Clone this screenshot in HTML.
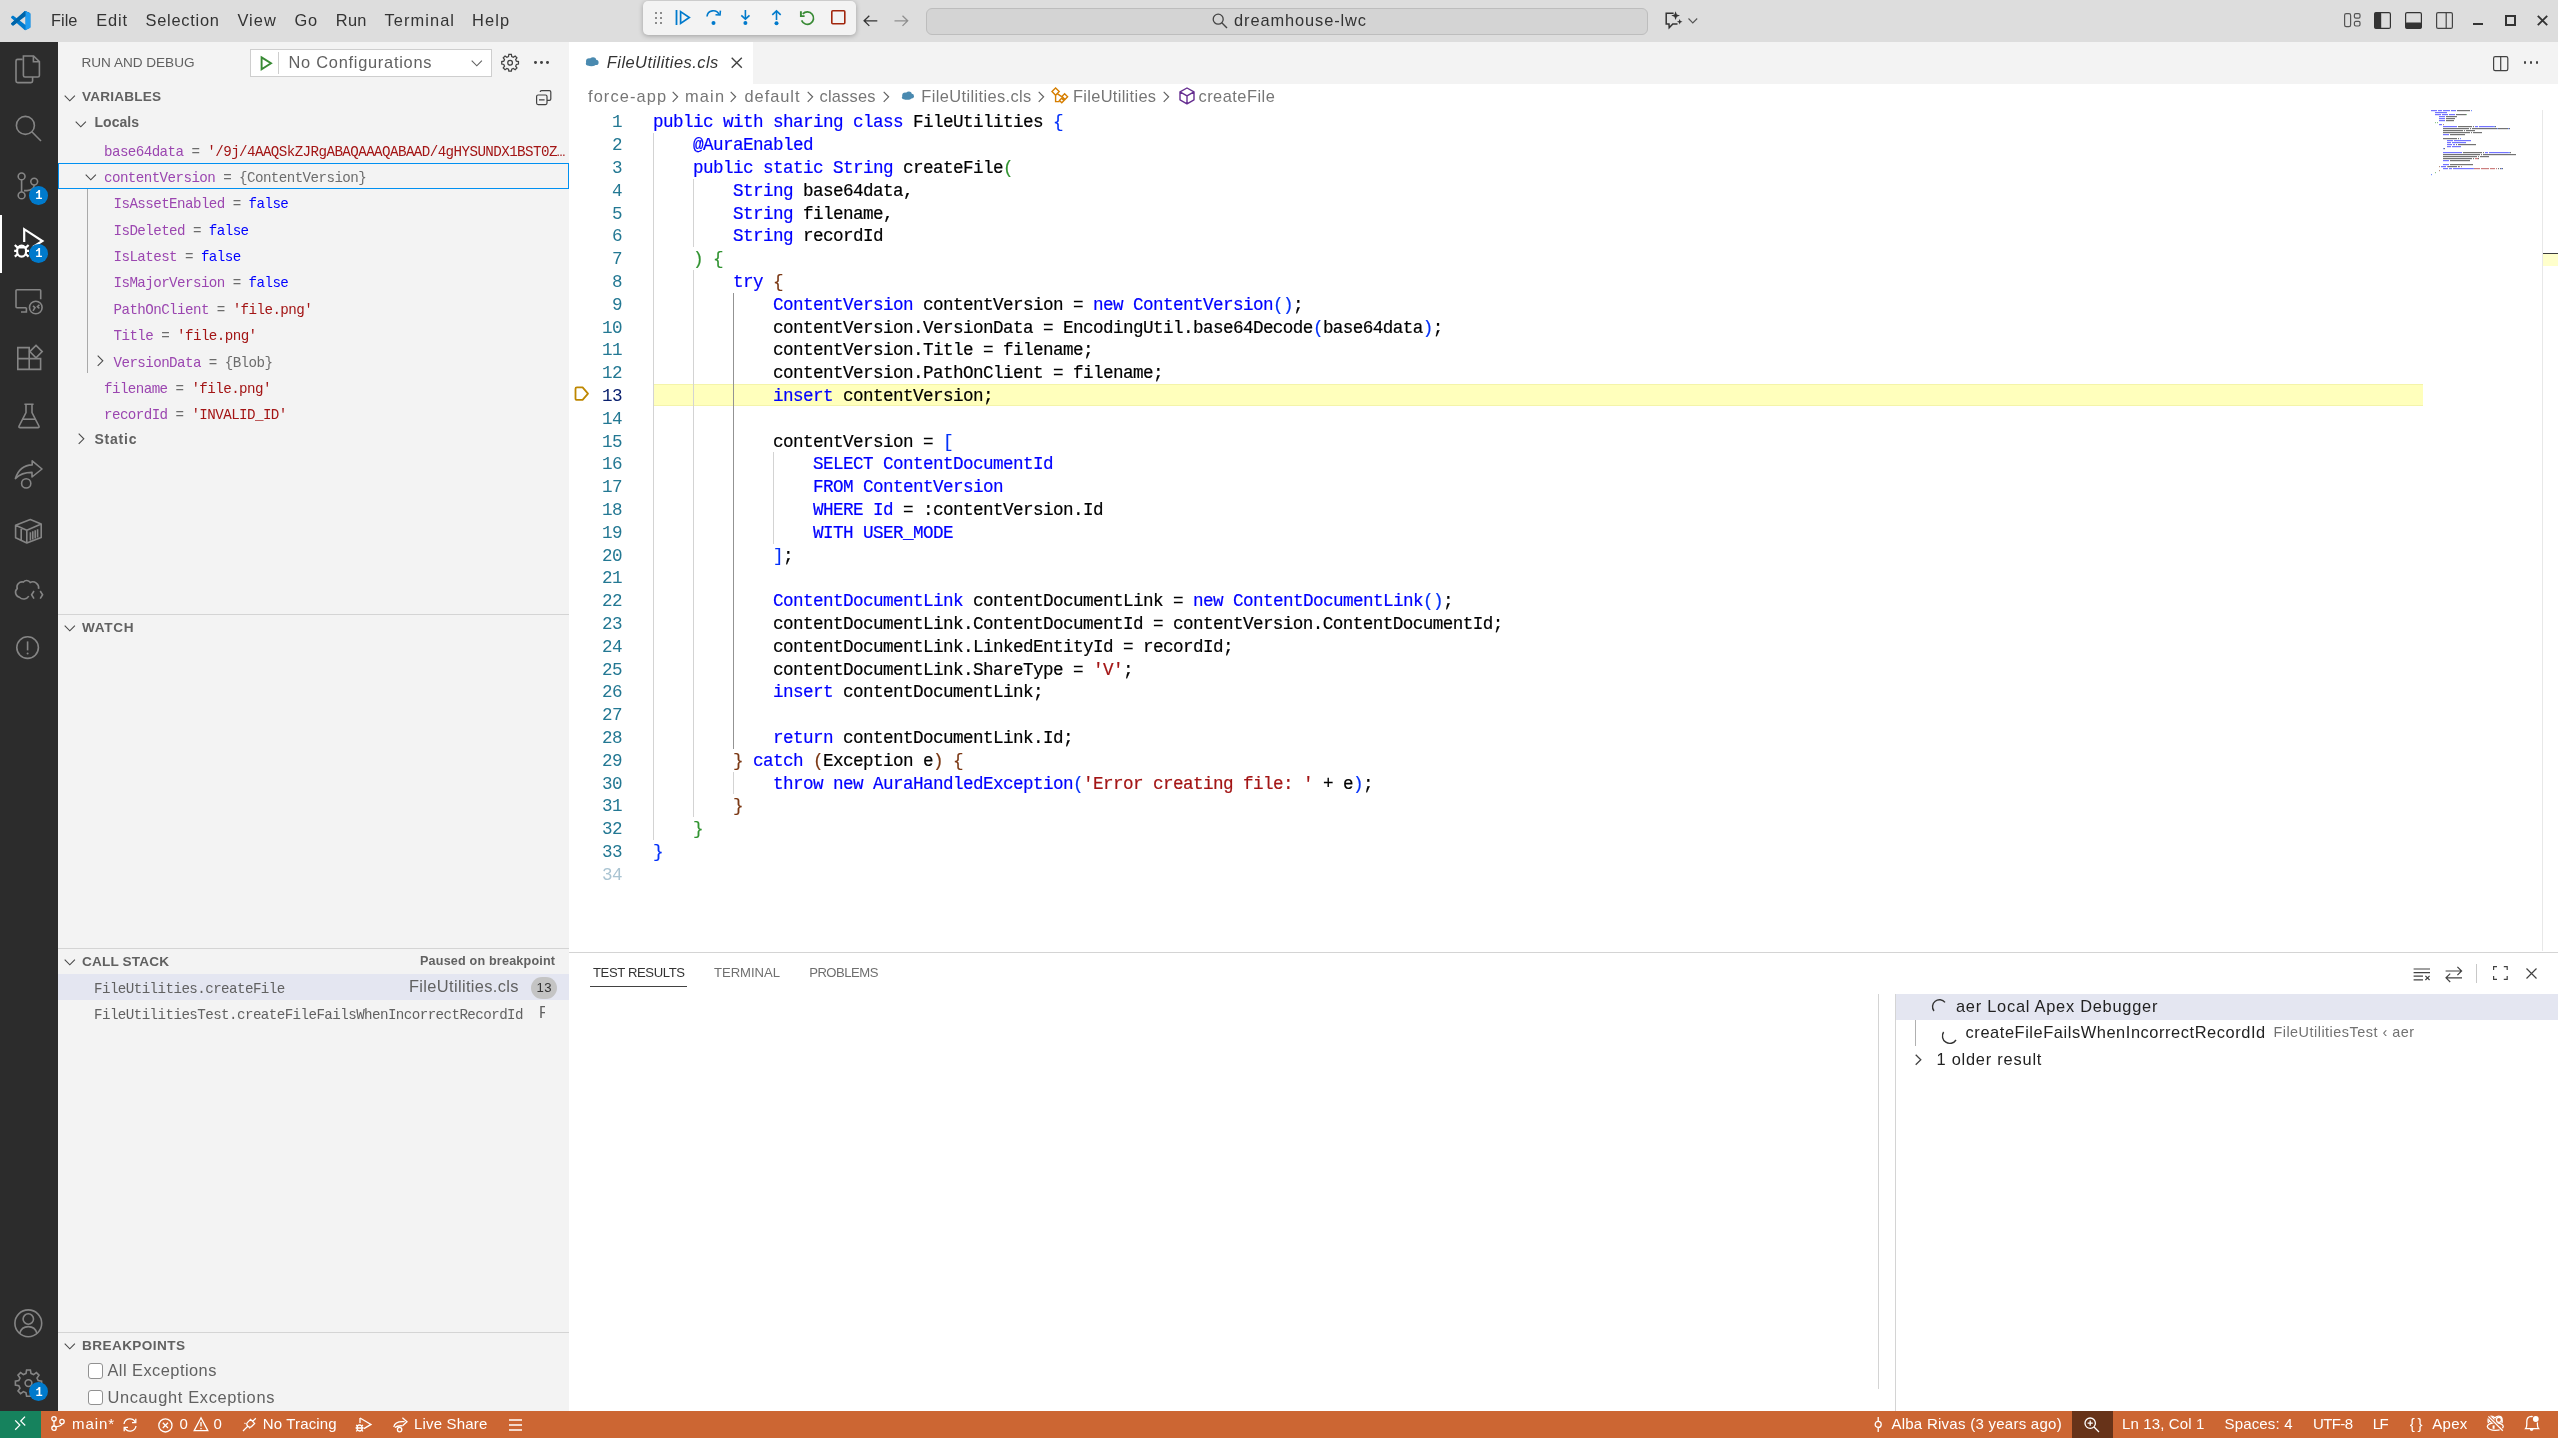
<!DOCTYPE html><html><head><meta charset="utf-8">
<style>
*{box-sizing:border-box;margin:0;padding:0}
html,body{width:2558px;height:1438px;overflow:hidden;background:#fff}
body{position:relative;will-change:transform;font-family:"Liberation Sans",sans-serif;color:#333}
.a{position:absolute}
.t{position:absolute;white-space:pre;line-height:1}
.m{font-family:"Liberation Mono",monospace}
svg{position:absolute;overflow:visible}
.code{position:absolute;left:653px;font-family:"Liberation Mono",monospace;font-size:17.6px;letter-spacing:-0.56px;white-space:pre;line-height:22.8px;color:#000;-webkit-text-stroke:0.2px currentColor}
.ln{position:absolute;width:60px;text-align:right;font-family:"Liberation Mono",monospace;font-size:17.6px;letter-spacing:-0.56px;white-space:pre;line-height:22.8px;color:#237893}
.k{color:#0000ff}.s{color:#a31515}.b1{color:#0431fa}.b2{color:#319331}.b3{color:#7b3814}
.vn{color:#9b46b0}.vb{color:#0000ff}.vs{color:#a31515}.vt{color:#6c6c6c}
</style></head>
<body>
<div class="a" style="left:0px;top:0px;width:2558px;height:42px;background:#dddddd;"></div>
<div class="a" style="left:0px;top:42px;width:58px;height:1369px;background:#2c2c2c;"></div>
<div class="a" style="left:58px;top:42px;width:511px;height:1369px;background:#f3f3f3;"></div>
<div class="a" style="left:569px;top:42px;width:1989px;height:42px;background:#f3f3f3;"></div>
<div class="a" style="left:569px;top:42px;width:184px;height:42px;background:#ffffff;"></div>
<div class="a" style="left:0px;top:1411px;width:2558px;height:27px;background:#cc6633;"></div>
<div class="a" style="left:0px;top:1411px;width:41px;height:27px;background:#16825d;"></div>
<svg style="left:10.8px;top:10.8px;" width="19.4" height="19.2" viewBox="0 0 19.4 19.2"><g transform="scale(0.194,0.192)"><path d="M70.9 99.3C72.5 99.9 74.3 99.9 75.9 99.1L96.5 89.2C98.6 88.2 100 86 100 83.6V16.4C100 14 98.6 11.8 96.5 10.8L75.9 0.9C73.8-0.1 71.3 0.1 69.5 1.4C69.3 1.6 69 1.8 68.8 2.1L29.4 38L12.2 25C10.6 23.8 8.4 23.9 6.9 25.2L1.4 30.3C-0.5 31.9-0.5 34.8 1.4 36.4L16.2 50L1.4 63.6C-0.5 65.2-0.5 68.1 1.4 69.7L6.9 74.8C8.4 76.1 10.6 76.2 12.2 75L29.4 62L68.8 97.9C69.4 98.5 70.1 99 70.9 99.3ZM75 27.3L45.1 50L75 72.7V27.3Z" fill="#007acc"></path>
<path d="M96.5 10.8L75.9 0.9C73.5-0.3 70.6 0.2 68.8 2.1L1.4 63.6C-0.5 65.2-0.5 68.1 1.4 69.7L6.9 74.8C8.4 76.1 10.6 76.2 12.2 75L93.4 13.3C96.1 11.3 100 13.2 100 16.6V16.4C100 14 98.6 11.8 96.5 10.8Z" fill="#0065a9"></path>
<path d="M75 27.3L45.1 50L75 72.7Z" fill="#dddddd"></path>
<path d="M75.9 99.1C73.5 100.3 70.6 99.8 68.8 97.9C71 100.1 75 98.5 75 95.3V4.7C75 1.5 71 -0.1 68.8 2.1C70.6 0.2 73.5-0.3 75.9 0.9L96.5 10.8C98.6 11.8 100 14 100 16.4V83.6C100 86 98.6 88.2 96.5 89.2L75.9 99.1Z" fill="#1f9cf0"></path></g></svg>
<span class="t" style="left: 51px; top: 12.42px; font-size: 16.4px; color: rgb(51, 51, 51); letter-spacing: 0.026px;">File</span>
<span class="t" style="left: 96.2px; top: 12.42px; font-size: 16.4px; color: rgb(51, 51, 51); letter-spacing: 0.85px;">Edit</span>
<span class="t" style="left: 145.6px; top: 12.42px; font-size: 16.4px; color: rgb(51, 51, 51); letter-spacing: 0.733px;">Selection</span>
<span class="t" style="left: 237.4px; top: 12.42px; font-size: 16.4px; color: rgb(51, 51, 51); letter-spacing: 1.089px;">View</span>
<span class="t" style="left: 294.4px; top: 12.42px; font-size: 16.4px; color: rgb(51, 51, 51); letter-spacing: 0.925px;">Go</span>
<span class="t" style="left: 335.7px; top: 12.42px; font-size: 16.4px; color: rgb(51, 51, 51); letter-spacing: 0.361px;">Run</span>
<span class="t" style="left: 384.5px; top: 12.42px; font-size: 16.4px; color: rgb(51, 51, 51); letter-spacing: 1.08px;">Terminal</span>
<span class="t" style="left: 472.1px; top: 12.42px; font-size: 16.4px; color: rgb(51, 51, 51); letter-spacing: 1.094px;">Help</span>
<div class="a" style="left:643px;top:1px;width:213px;height:34px;background:#f3f3f3;border-radius:5px;box-shadow:0 1px 5px rgba(0,0,0,0.28)"></div>
<svg style="left:654.5px;top:11.5px;" width="8" height="13" viewBox="0 0 8 13"><rect x="0" y="0" width="2" height="2" fill="#8c8c8c"></rect><rect x="0" y="5" width="2" height="2" fill="#8c8c8c"></rect><rect x="0" y="10" width="2" height="2" fill="#8c8c8c"></rect><rect x="5" y="0" width="2" height="2" fill="#8c8c8c"></rect><rect x="5" y="5" width="2" height="2" fill="#8c8c8c"></rect><rect x="5" y="10" width="2" height="2" fill="#8c8c8c"></rect></svg>
<svg style="left:675px;top:10px;" width="16" height="16" viewBox="0 0 16 16"><rect x="0.6" y="0" width="1.8" height="15" fill="#007acc"></rect><path d="M5.6 1.6 L14.3 7.5 L5.6 13.4 Z" fill="none" stroke="#007acc" stroke-width="1.7" stroke-linejoin="miter"></path></svg>
<svg style="left:706px;top:10px;" width="16" height="16" viewBox="0 0 16 16"><path d="M1 6.5 A6.3 6.3 0 0 1 13 4.5" fill="none" stroke="#007acc" stroke-width="1.6"></path><path d="M9.5 4.8 L14 5 L14.4 0.6" fill="none" stroke="#007acc" stroke-width="1.6"></path><circle cx="7.5" cy="13" r="2" fill="#007acc"></circle></svg>
<svg style="left:740px;top:10px;" width="12" height="16" viewBox="0 0 12 16"><path d="M5.4 0 V9" stroke="#007acc" stroke-width="1.6"></path><path d="M1.3 5.3 L5.4 9.2 L9.5 5.3" fill="none" stroke="#007acc" stroke-width="1.6"></path><circle cx="5.4" cy="13" r="2" fill="#007acc"></circle></svg>
<svg style="left:771px;top:10px;" width="12" height="16" viewBox="0 0 12 16"><path d="M5.5 1 V10" stroke="#007acc" stroke-width="1.6"></path><path d="M1.3 4.9 L5.5 0.9 L9.7 4.9" fill="none" stroke="#007acc" stroke-width="1.6"></path><circle cx="5.5" cy="13.2" r="2" fill="#007acc"></circle></svg>
<svg style="left:790px;top:4px;" width="30" height="28" viewBox="0 0 30 28"><path d="M12.8 9.9 A6.2 6.2 0 1 1 11.6 16.4" fill="none" stroke="#388a34" stroke-width="1.7"></path><path d="M10.9 7.2 V12.1 H14.6" fill="none" stroke="#388a34" stroke-width="1.9"></path></svg>
<svg style="left:831.2px;top:9.8px;" width="15" height="15" viewBox="0 0 15 15"><rect x="0.8" y="0.8" width="13" height="13" rx="1" fill="none" stroke="#a1260d" stroke-width="1.6"></rect></svg>
<svg style="left:862.5px;top:15px;" width="15" height="12" viewBox="0 0 15 12"><path d="M14.3 5.8 H1.2 M6.3 0.7 L1.1 5.8 L6.3 10.9" fill="none" stroke="#333" stroke-width="1.3"></path></svg>
<svg style="left:893.5px;top:15px;" width="15" height="12" viewBox="0 0 15 12"><path d="M0.5 5.8 H13.6 M8.5 0.7 L13.7 5.8 L8.5 10.9" fill="none" stroke="#8f8f8f" stroke-width="1.3"></path></svg>
<div class="a" style="left:926px;top:7.5px;width:722px;height:27px;background:#d4d4d4;border:1px solid #bdbdbd;border-radius:6px"></div>
<svg style="left:1211.8px;top:12.8px;" width="16" height="16" viewBox="0 0 16 16"><circle cx="6.2" cy="6.2" r="5" fill="none" stroke="#444" stroke-width="1.3"></circle><path d="M9.8 9.8 L15 15" stroke="#444" stroke-width="1.4"></path></svg>
<span class="t" style="left: 1234px; top: 11.92px; font-size: 16.4px; color: rgb(51, 51, 51); letter-spacing: 0.904px;">dreamhouse-lwc</span>
<svg style="left:1664px;top:10.8px;" width="20" height="18" viewBox="0 0 20 18"><path d="M9.6 2.2 H2.2 V13 H5 L5.2 16.8 L8.8 13 H13.5" fill="none" stroke="#333" stroke-width="1.5"></path><path d="M11.6 0.2 L12.8 3.4 L16 4.6 L12.8 5.8 L11.6 9 L10.4 5.8 L7.2 4.6 L10.4 3.4 Z" fill="#333"></path><path d="M15.7 8 L16.5 10 L18.5 10.8 L16.5 11.6 L15.7 13.6 L14.9 11.6 L12.9 10.8 L14.9 10 Z" fill="#333"></path></svg>
<svg style="left:1687.5px;top:17.5px;" width="10" height="6" viewBox="0 0 10 6"><path d="M0.5 0.5 L4.8 5 L9.2 0.5" fill="none" stroke="#555" stroke-width="1.1"></path></svg>
<svg style="left:2344px;top:13px;" width="18" height="15" viewBox="0 0 18 15"><rect x="0.6" y="0.6" width="6" height="13" rx="1.6" fill="none" stroke="#555" stroke-width="1.2"></rect><rect x="10.4" y="0.6" width="5.6" height="4.6" rx="1.4" fill="none" stroke="#555" stroke-width="1.2"></rect><rect x="10.4" y="8.4" width="5.6" height="4.6" rx="1.4" fill="none" stroke="#555" stroke-width="1.2"></rect></svg>
<svg style="left:2374px;top:12px;" width="17" height="17" viewBox="0 0 17 17"><rect x="0.6" y="0.6" width="15.8" height="15.8" rx="1.5" fill="none" stroke="#333" stroke-width="1.2"></rect><rect x="0.6" y="0.6" width="6.6" height="15.8" rx="1.2" fill="#333"></rect></svg>
<svg style="left:2405px;top:12px;" width="17" height="17" viewBox="0 0 17 17"><rect x="0.6" y="0.6" width="15.8" height="15.8" rx="1.5" fill="none" stroke="#333" stroke-width="1.2"></rect><rect x="0.6" y="10.4" width="15.8" height="6" rx="1.2" fill="#333"></rect></svg>
<svg style="left:2436px;top:12px;" width="17" height="17" viewBox="0 0 17 17"><rect x="0.6" y="0.6" width="15.8" height="15.8" rx="1.5" fill="none" stroke="#444" stroke-width="1.2"></rect><path d="M10.2 0.6 V16.4" stroke="#444" stroke-width="1.2"></path></svg>
<div class="a" style="left:2472.5px;top:23px;width:10.5px;height:2px;background:#333;"></div>
<svg style="left:2505px;top:15px;" width="11" height="11" viewBox="0 0 11 11"><rect x="1" y="1" width="9" height="9" fill="none" stroke="#333" stroke-width="2"></rect></svg>
<svg style="left:2536.5px;top:15px;" width="11" height="11" viewBox="0 0 11 11"><path d="M0.8 0.8 L10.2 10.2 M10.2 0.8 L0.8 10.2" stroke="#333" stroke-width="1.9"></path></svg>
<svg style="left:15px;top:55px;" width="26" height="29" viewBox="0 0 26 29"><path d="M7.6 4.4 H2.6 Q1 4.4 1 6 V26 Q1 27.6 2.6 27.6 H16 Q17.6 27.6 17.6 26 V22" fill="none" stroke="#858585" stroke-width="1.6"></path><path d="M8.4 1 H18.6 L24.4 6.6 V20.4 Q24.4 22 22.8 22 H10 Q8.4 22 8.4 20.4 Z" fill="none" stroke="#858585" stroke-width="1.6"></path><path d="M18.4 1.2 V6.8 H24.2" fill="none" stroke="#858585" stroke-width="1.6"></path></svg>
<svg style="left:15px;top:114.5px;" width="27" height="27" viewBox="0 0 27 27"><circle cx="10.4" cy="10.4" r="9" fill="none" stroke="#858585" stroke-width="1.6"></circle><path d="M16.8 16.8 L26 26" fill="none" stroke="#858585" stroke-width="1.6"></path></svg>
<svg style="left:17px;top:172px;" width="22" height="28" viewBox="0 0 22 28"><circle cx="4.6" cy="4.4" r="3.4" fill="none" stroke="#858585" stroke-width="1.6"></circle><circle cx="4.6" cy="23.4" r="3.4" fill="none" stroke="#858585" stroke-width="1.6"></circle><circle cx="17.2" cy="9.6" r="3.4" fill="none" stroke="#858585" stroke-width="1.6"></circle><path d="M4.6 7.8 V20 M17.2 13 Q17.2 18 10 18.6 H7" fill="none" stroke="#858585" stroke-width="1.6"></path></svg>
<div class="a" style="left:29px;top:186px;width:18.6px;height:18.6px;border-radius:50%;background:#007acc"></div>
<span class="t m" style="left:35.20px;top:190.31px;font-size:12px;color:#fff;font-weight:700;">1</span>
<div class="a" style="left:0;top:215px;width:2.4px;height:57.6px;background:#fff"></div>
<svg style="left:0px;top:215px;" width="58" height="58" viewBox="0 215 58 58"><path d="M24.2 241.9 V229.2 L42.4 241 L33 247" fill="none" stroke="#ffffff" stroke-width="2.2"></path><ellipse cx="21.6" cy="251.2" rx="4.5" ry="5.5" fill="none" stroke="#ffffff" stroke-width="2.2"></ellipse><path d="M17 247.4 H26.2 M14.8 245 L17.6 247.6 M28.6 245 L25.8 247.6 M14.2 250.8 H17 M29 250.8 H26.2 M14.8 256.6 L17.8 254 M28.6 256.6 L25.6 254" fill="none" stroke="#ffffff" stroke-width="2.2"></path></svg>
<div class="a" style="left:29px;top:243.7px;width:19px;height:19px;border-radius:50%;background:#007acc"></div>
<span class="t m" style="left:35.20px;top:247.81px;font-size:12px;color:#fff;font-weight:700;">1</span>
<svg style="left:0px;top:280px;" width="58" height="100" viewBox="0 280 58 100"><path d="M26.4 307.8 H17 Q16 307.8 16 306.8 V290.6 Q16 289.7 17 289.7 H39.8 Q40.7 289.7 40.7 290.6 V299.2 M26.4 307.8 V312 H21" fill="none" stroke="#858585" stroke-width="1.6"></path><circle cx="35.8" cy="307.5" r="6.3" fill="none" stroke="#858585" stroke-width="1.6"></circle><path d="M33 305.8 L35 307.6 L33 310.8 M39.4 304.8 L37.4 306.8 L39.4 308.4" fill="none" stroke="#858585" stroke-width="1.6"></path></svg>
<svg style="left:0px;top:330px;" width="58" height="50" viewBox="0 330 58 50"><path d="M17.8 347.6 H29.2 V369.4 H17.8 Z M17.8 358.6 H40.6 V369.4 H29.2" fill="none" stroke="#858585" stroke-width="1.6"></path><path d="M36 345.4 L42.2 351.6 L36 357.8 L29.8 351.6 Z" fill="none" stroke="#858585" stroke-width="1.6"></path></svg>
<svg style="left:18px;top:403px;" width="22" height="26" viewBox="0 0 22 26"><path d="M6.4 1.2 H15.6 M8 1.2 V9.6 L1 23.2 Q0.6 24.6 2 24.6 H20 Q21.4 24.6 21 23.2 L14 9.6 V1.2" fill="none" stroke="#858585" stroke-width="1.6"></path><path d="M4.6 16.2 H17.4" fill="none" stroke="#858585" stroke-width="1.6"></path></svg>
<svg style="left:0px;top:440px;" width="58" height="58" viewBox="0 440 58 58"><path d="M42 469 L32.2 460.8 V464.9 Q19.6 465.2 15.4 478.6 Q21.4 472.4 32 472.4 V477 Z" fill="none" stroke="#858585" stroke-width="1.6" stroke-linejoin="round"></path><circle cx="26.2" cy="483.4" r="4.6" fill="none" stroke="#858585" stroke-width="1.6"></circle></svg>
<svg style="left:0px;top:510px;" width="58" height="100" viewBox="0 510 58 100"><path d="M15.6 525.3 L30.3 519.6 L41.2 523.9 V537.5 L26.8 543 L15.6 537.8 Z M15.6 525.3 L26.8 530.2 L41.2 523.9 M26.8 530.2 V543 M21.2 527.8 V540.4" fill="none" stroke="#858585" stroke-width="1.6" stroke-linejoin="round"></path><path d="M30.4 532.2 V540.6 M32.8 531.2 V539.6 M35.2 530.2 V538.6 M37.6 529.2 V537.6" fill="none" stroke="#858585" stroke-width="1.6"></path></svg>
<svg style="left:0px;top:570px;" width="58" height="40" viewBox="0 570 58 40"><path d="M38.6 588.8 A6 6 0 0 0 30.2 582.4 A4.2 4.2 0 0 0 23.4 582 A5.2 5.2 0 0 0 17.2 588.6 A5 5 0 0 0 19.4 597.2 A6 6 0 0 0 28.8 596.2" fill="none" stroke="#858585" stroke-width="1.6"></path><path d="M34 591 L31.6 594.8 L34 598.6 M40.2 591 L42.6 594.8 L40.2 598.6" fill="none" stroke="#858585" stroke-width="1.6"></path></svg>
<svg style="left:16px;top:636px;" width="24" height="24" viewBox="0 0 24 24"><circle cx="11.6" cy="11.6" r="10.8" fill="none" stroke="#858585" stroke-width="1.6"></circle><path d="M11.6 5.4 V14.4" fill="none" stroke="#858585" stroke-width="1.6"></path><circle cx="11.6" cy="17.4" r="1" fill="#858585"></circle></svg>
<svg style="left:14.4px;top:1309px;" width="29" height="29" viewBox="0 0 29 29"><circle cx="14.3" cy="14.3" r="13.4" fill="none" stroke="#858585" stroke-width="1.6"></circle><circle cx="14.3" cy="10" r="5.2" fill="none" stroke="#858585" stroke-width="1.6"></circle><path d="M5.6 24.4 Q7.6 17.6 14.3 17.6 Q21 17.6 23 24.4" fill="none" stroke="#858585" stroke-width="1.6"></path></svg>
<svg style="left:16.4px;top:1368.6px;" width="26" height="27" viewBox="0 0 26 27"><path d="M10.6 1 H14.4 L15 4.4 L17.6 5.6 L20.4 3.6 L23 6.2 L21 9 L22.2 11.6 L25.6 12.2 V16 L22.2 16.6 L21 19.2 L23 22 L20.4 24.6 L17.6 22.6 L15 23.8 L14.4 27.2 H10.6 L10 23.8 L7.4 22.6 L4.6 24.6 L2 22 L4 19.2 L2.8 16.6 L-0.6 16 V12.2 L2.8 11.6 L4 9 L2 6.2 L4.6 3.6 L7.4 5.6 L10 4.4 Z" fill="none" stroke="#858585" stroke-width="1.6"></path><circle cx="12.5" cy="14.1" r="3.4" fill="none" stroke="#858585" stroke-width="1.6"></circle></svg>
<div class="a" style="left:29px;top:1382.3px;width:19px;height:19px;border-radius:50%;background:#007acc"></div>
<span class="t m" style="left:35.40px;top:1386.81px;font-size:12px;color:#fff;font-weight:700;">1</span>
<span class="t" style="left: 81.5px; top: 55.79px; font-size: 13.6px; color: rgb(97, 97, 97); letter-spacing: -0.025px;">RUN AND DEBUG</span>
<div class="a" style="left:250px;top:49px;width:242px;height:28px;background:#ffffff;border:1px solid #cecece"></div>
<svg style="left:259.5px;top:55.5px;" width="13" height="15" viewBox="0 0 13 15"><path d="M1.6 1.4 L11 7.3 L1.6 13.2 Z" fill="none" stroke="#388a34" stroke-width="1.9" stroke-linejoin="miter"></path></svg>
<div class="a" style="left:278px;top:52px;width:1px;height:22px;background:#cecece;"></div>
<span class="t" style="left: 288.5px; top: 53.72px; font-size: 16.4px; color: rgb(97, 97, 97); letter-spacing: 0.737px;">No Configurations</span>
<svg style="left:471px;top:59.5px;" width="12" height="7" viewBox="0 0 12 7"><path d="M0.7 0.7 L5.8 5.8 L10.9 0.7" fill="none" stroke="#616161" stroke-width="1.1"></path></svg>
<svg style="left:501.6px;top:54px;" width="18" height="19" viewBox="0 0 18 19"><g transform="scale(0.9)"><path d="M7.6 0.5 H10.4 L10.8 2.8 L12.6 3.6 L14.6 2.2 L16.6 4.2 L15.2 6.2 L16 8 L18.3 8.4 V11.2 L16 11.6 L15.2 13.4 L16.6 15.4 L14.6 17.4 L12.6 16 L10.8 16.8 L10.4 19.1 H7.6 L7.2 16.8 L5.4 16 L3.4 17.4 L1.4 15.4 L2.8 13.4 L2 11.6 L-0.3 11.2 V8.4 L2 8 L2.8 6.2 L1.4 4.2 L3.4 2.2 L5.4 3.6 L7.2 2.8 Z" fill="none" stroke="#424242" stroke-width="1.4"></path><circle cx="9" cy="9.8" r="2.6" fill="none" stroke="#424242" stroke-width="1.4"></circle></g></svg>
<div class="a" style="left:534.1px;top:60.8px;width:2.8px;height:2.8px;border-radius:50%;background:#424242"></div>
<div class="a" style="left:540.2px;top:60.8px;width:2.8px;height:2.8px;border-radius:50%;background:#424242"></div>
<div class="a" style="left:546.3000000000001px;top:60.8px;width:2.8px;height:2.8px;border-radius:50%;background:#424242"></div>
<svg style="left:64px;top:94.5px;" width="12" height="7" viewBox="0 0 12 7"><path d="M0.7 0.7 L5.8 5.8 L10.9 0.7" fill="none" stroke="#4a4a4a" stroke-width="1.1"></path></svg>
<span class="t" style="left: 82px; top: 90.29px; font-size: 13.6px; color: rgb(97, 97, 97); font-weight: 700; letter-spacing: 0.182px;">VARIABLES</span>
<svg style="left:535.5px;top:89.5px;" width="16" height="16" viewBox="0 0 16 16"><rect x="0.6" y="5" width="10.4" height="9.6" rx="1.5" fill="none" stroke="#424242" stroke-width="1.2"></rect><path d="M4.2 2 Q4.2 0.6 5.6 0.6 H13.4 Q14.8 0.6 14.8 2 V9 Q14.8 10.4 13.4 10.4 H11 M3 9.8 H8.6" fill="none" stroke="#424242" stroke-width="1.2"></path></svg>
<svg style="left:75px;top:120.5px;" width="12" height="7" viewBox="0 0 12 7"><path d="M0.7 0.7 L5.8 5.8 L10.9 0.7" fill="none" stroke="#4a4a4a" stroke-width="1.1"></path></svg>
<span class="t" style="left: 94.5px; top: 115.45px; font-size: 14px; color: rgb(97, 97, 97); font-weight: 700; letter-spacing: 0.028px;">Locals</span>
<span class="t m" style="left:104px;top:144.52px;font-size:14.2px;letter-spacing:-0.57px;color:#616161"><span class="vn">base64data</span><span class="vt"> = </span><span class="vs">'/9j/4AAQSkZJRgABAQAAAQABAAD/4gHYSUNDX1BST0Z…</span></span>
<div class="a" style="left:58px;top:163.2px;width:511px;height:25.6px;background:transparent;border:1px solid #0090f1"></div>
<svg style="left:85px;top:174px;" width="12" height="7" viewBox="0 0 12 7"><path d="M0.7 0.7 L5.8 5.8 L10.9 0.7" fill="none" stroke="#4a4a4a" stroke-width="1.1"></path></svg>
<span class="t m" style="left:104px;top:170.72px;font-size:14.2px;letter-spacing:-0.57px;color:#616161"><span class="vn">contentVersion</span><span class="vt"> = </span><span class="vt">{ContentVersion}</span></span>
<div class="a" style="left:86.9px;top:189.4px;width:1px;height:184px;background:#a9a9a9;"></div>
<span class="t m" style="left:113.5px;top:197.12px;font-size:14.2px;letter-spacing:-0.57px;color:#616161"><span class="vn">IsAssetEnabled</span><span class="vt"> = </span><span class="vb">false</span></span>
<span class="t m" style="left:113.5px;top:223.52px;font-size:14.2px;letter-spacing:-0.57px;color:#616161"><span class="vn">IsDeleted</span><span class="vt"> = </span><span class="vb">false</span></span>
<span class="t m" style="left:113.5px;top:249.92px;font-size:14.2px;letter-spacing:-0.57px;color:#616161"><span class="vn">IsLatest</span><span class="vt"> = </span><span class="vb">false</span></span>
<span class="t m" style="left:113.5px;top:276.32px;font-size:14.2px;letter-spacing:-0.57px;color:#616161"><span class="vn">IsMajorVersion</span><span class="vt"> = </span><span class="vb">false</span></span>
<span class="t m" style="left:113.5px;top:302.72px;font-size:14.2px;letter-spacing:-0.57px;color:#616161"><span class="vn">PathOnClient</span><span class="vt"> = </span><span class="vs">'file.png'</span></span>
<span class="t m" style="left:113.5px;top:329.12px;font-size:14.2px;letter-spacing:-0.57px;color:#616161"><span class="vn">Title</span><span class="vt"> = </span><span class="vs">'file.png'</span></span>
<span class="t m" style="left:113.5px;top:355.52px;font-size:14.2px;letter-spacing:-0.57px;color:#616161"><span class="vn">VersionData</span><span class="vt"> = </span><span class="vt">{Blob}</span></span>
<svg style="left:97px;top:355px;" width="7" height="12" viewBox="0 0 7 12"><path d="M0.7 0.7 L5.8 5.8 L0.7 10.9" fill="none" stroke="#4a4a4a" stroke-width="1.1"></path></svg>
<span class="t m" style="left:104px;top:381.72px;font-size:14.2px;letter-spacing:-0.57px;color:#616161"><span class="vn">filename</span><span class="vt"> = </span><span class="vs">'file.png'</span></span>
<span class="t m" style="left:104px;top:408.12px;font-size:14.2px;letter-spacing:-0.57px;color:#616161"><span class="vn">recordId</span><span class="vt"> = </span><span class="vs">'INVALID_ID'</span></span>
<svg style="left:78px;top:432.5px;" width="7" height="12" viewBox="0 0 7 12"><path d="M0.7 0.7 L5.8 5.8 L0.7 10.9" fill="none" stroke="#4a4a4a" stroke-width="1.1"></path></svg>
<span class="t" style="left: 94.5px; top: 431.85px; font-size: 14px; color: rgb(97, 97, 97); font-weight: 700; letter-spacing: 0.775px;">Static</span>
<div class="a" style="left:58px;top:614px;width:511px;height:1px;background:#d4d4d4;"></div>
<svg style="left:64px;top:624.5px;" width="12" height="7" viewBox="0 0 12 7"><path d="M0.7 0.7 L5.8 5.8 L10.9 0.7" fill="none" stroke="#4a4a4a" stroke-width="1.1"></path></svg>
<span class="t" style="left: 82px; top: 621.49px; font-size: 13.6px; color: rgb(97, 97, 97); font-weight: 700; letter-spacing: 0.668px;">WATCH</span>
<div class="a" style="left:58px;top:948px;width:511px;height:1px;background:#d4d4d4;"></div>
<svg style="left:64px;top:958.5px;" width="12" height="7" viewBox="0 0 12 7"><path d="M0.7 0.7 L5.8 5.8 L10.9 0.7" fill="none" stroke="#4a4a4a" stroke-width="1.1"></path></svg>
<span class="t" style="left: 82px; top: 954.89px; font-size: 13.6px; color: rgb(97, 97, 97); font-weight: 700; letter-spacing: 0.156px;">CALL STACK</span>
<span class="t" style="left: 420px; top: 954.54px; font-size: 12.6px; color: rgb(97, 97, 97); font-weight: 700; letter-spacing: 0.181px;">Paused on breakpoint</span>
<div class="a" style="left:58px;top:974.2px;width:511px;height:25.7px;background:#e4e6f1;"></div>
<span class="t m" style="left:94px;top:982.42px;font-size:14.2px;letter-spacing:-0.57px;color:#616161">FileUtilities.createFile</span>
<span class="t" style="left: 409px; top: 978.32px; font-size: 16.4px; color: rgb(97, 97, 97); letter-spacing: 0.354px;">FileUtilities.cls</span>
<div class="a" style="left:531px;top:977px;width:25.6px;height:21.6px;border-radius:11px;background:#c4c4c4"></div>
<span class="t" style="left: 536.5px; top: 981.23px; font-size: 13.2px; color: rgb(51, 51, 51); letter-spacing: 0.328px;">13</span>
<span class="t m" style="left:94px;top:1008.22px;font-size:14.2px;letter-spacing:-0.57px;color:#616161">FileUtilitiesTest.createFileFailsWhenIncorrectRecordId</span>
<div class="a" style="left:539.6px;top:1005px;width:5.6px;height:20px;overflow:hidden"><span class="t" style="left:-0.6px;top:-0.00px;font-size:15.6px;color:#616161">F</span></div>
<div class="a" style="left:58px;top:1332px;width:511px;height:1px;background:#d4d4d4;"></div>
<svg style="left:64px;top:1342.5px;" width="12" height="7" viewBox="0 0 12 7"><path d="M0.7 0.7 L5.8 5.8 L10.9 0.7" fill="none" stroke="#4a4a4a" stroke-width="1.1"></path></svg>
<span class="t" style="left: 82px; top: 1338.89px; font-size: 13.6px; color: rgb(97, 97, 97); font-weight: 700; letter-spacing: 0.405px;">BREAKPOINTS</span>
<div class="a" style="left:88px;top:1363.3px;width:15.4px;height:15.4px;background:#ffffff;border:1px solid #919191;border-radius:3px"></div>
<span class="t" style="left: 107.4px; top: 1362.32px; font-size: 16.4px; color: rgb(97, 97, 97); letter-spacing: 0.465px;">All Exceptions</span>
<div class="a" style="left:88px;top:1389.8px;width:15.4px;height:15.4px;background:#ffffff;border:1px solid #919191;border-radius:3px"></div>
<span class="t" style="left: 107.4px; top: 1388.82px; font-size: 16.4px; color: rgb(97, 97, 97); letter-spacing: 0.672px;">Uncaught Exceptions</span>
<svg style="left:584px;top:55px;" width="16" height="14" viewBox="0 0 16 14"><g fill="#4a8ab0"><circle cx="5.2" cy="6.4" r="3.2"></circle><circle cx="9" cy="5.4" r="3.2"></circle><circle cx="12" cy="7.4" r="2.6"></circle><ellipse cx="7.4" cy="8.6" rx="4.6" ry="2.6"></ellipse><circle cx="3.6" cy="8.8" r="1.8"></circle></g></svg>
<span class="t" style="left: 606.8px; top: 53.92px; font-size: 16.4px; color: rgb(51, 51, 51); font-style: italic; letter-spacing: 0.479px;">FileUtilities.cls</span>
<svg style="left:730.5px;top:57px;" width="11.5" height="11.5" viewBox="0 0 11.5 11.5"><path d="M0.7 0.7 L10.8 10.8 M10.8 0.7 L0.7 10.8" stroke="#424242" stroke-width="1.4"></path></svg>
<svg style="left:2492.8px;top:55.6px;" width="16" height="15.5" viewBox="0 0 16 15.5"><rect x="0.6" y="0.6" width="14.2" height="14" rx="1.6" fill="none" stroke="#424242" stroke-width="1.2"></rect><path d="M7.7 0.6 V14.6" stroke="#424242" stroke-width="1.2"></path></svg>
<div class="a" style="left:2523.6px;top:60.8px;width:2.8px;height:2.8px;border-radius:50%;background:#424242"></div>
<div class="a" style="left:2529.6px;top:60.8px;width:2.8px;height:2.8px;border-radius:50%;background:#424242"></div>
<div class="a" style="left:2535.6px;top:60.8px;width:2.8px;height:2.8px;border-radius:50%;background:#424242"></div>
<span class="t" style="left: 588px; top: 87.72px; font-size: 16.4px; color: rgb(118, 118, 118); letter-spacing: 1.094px;">force-app</span>
<svg style="left:672px;top:91px;" width="7" height="12" viewBox="0 0 7 12"><path d="M0.7 0.8 L5.6 5.8 L0.7 10.8" fill="none" stroke="#616161" stroke-width="1.2"></path></svg>
<span class="t" style="left: 685px; top: 87.72px; font-size: 16.4px; color: rgb(118, 118, 118); letter-spacing: 1.156px;">main</span>
<svg style="left:807px;top:91px;" width="7" height="12" viewBox="0 0 7 12"><path d="M0.7 0.8 L5.6 5.8 L0.7 10.8" fill="none" stroke="#616161" stroke-width="1.2"></path></svg>
<span class="t" style="left: 744.5px; top: 87.72px; font-size: 16.4px; color: rgb(118, 118, 118); letter-spacing: 0.964px;">default</span>
<svg style="left:730px;top:91px;" width="7" height="12" viewBox="0 0 7 12"><path d="M0.7 0.8 L5.6 5.8 L0.7 10.8" fill="none" stroke="#616161" stroke-width="1.2"></path></svg>
<span class="t" style="left: 819.5px; top: 87.72px; font-size: 16.4px; color: rgb(118, 118, 118); letter-spacing: 0.224px;">classes</span>
<svg style="left:883.3px;top:91px;" width="7" height="12" viewBox="0 0 7 12"><path d="M0.7 0.8 L5.6 5.8 L0.7 10.8" fill="none" stroke="#616161" stroke-width="1.2"></path></svg>
<svg style="left:899.5px;top:89px;" width="16" height="14" viewBox="0 0 16 14"><g fill="#4a8ab0"><circle cx="5.2" cy="6.4" r="3"></circle><circle cx="8.8" cy="5.4" r="3"></circle><circle cx="11.6" cy="7.2" r="2.4"></circle><ellipse cx="7.2" cy="8.4" rx="4.4" ry="2.4"></ellipse><circle cx="3.6" cy="8.6" r="1.7"></circle></g></svg>
<span class="t" style="left: 921.3px; top: 87.72px; font-size: 16.4px; color: rgb(118, 118, 118); letter-spacing: 0.386px;">FileUtilities.cls</span>
<svg style="left:1038px;top:91px;" width="7" height="12" viewBox="0 0 7 12"><path d="M0.7 0.8 L5.6 5.8 L0.7 10.8" fill="none" stroke="#616161" stroke-width="1.2"></path></svg>
<svg style="left:1051px;top:87px;" width="18" height="18" viewBox="0 0 18 18"><path d="M1 4.6 L4.6 1 L8.2 4.6 L4.6 8.2 Z" fill="none" stroke="#d67e00" stroke-width="1.4"></path><path d="M11 9.4 L13.6 6.8 L16.6 9.8 L14 12.4 Z M8.4 13.4 L10.6 11.2 L13 13.6 L10.8 15.8 Z" fill="none" stroke="#d67e00" stroke-width="1.4"></path><path d="M6.2 6.6 L11 9.8 M4.6 8.2 V14.6 H8.6" fill="none" stroke="#d67e00" stroke-width="1.4"></path></svg>
<span class="t" style="left: 1073px; top: 87.72px; font-size: 16.4px; color: rgb(118, 118, 118); letter-spacing: 0.314px;">FileUtilities</span>
<svg style="left:1162.6px;top:91px;" width="7" height="12" viewBox="0 0 7 12"><path d="M0.7 0.8 L5.6 5.8 L0.7 10.8" fill="none" stroke="#616161" stroke-width="1.2"></path></svg>
<svg style="left:1178.5px;top:87px;" width="16" height="18" viewBox="0 0 16 18"><path d="M8 1 L15 4.8 V12.8 L8 16.8 L1 12.8 V4.8 Z M1 4.8 L8 8.8 L15 4.8 M8 8.8 V16.8" fill="none" stroke="#652d90" stroke-width="1.4" stroke-linejoin="round"></path></svg>
<span class="t" style="left: 1198.5px; top: 87.72px; font-size: 16.4px; color: rgb(118, 118, 118); letter-spacing: 0.481px;">createFile</span>
<div class="a" style="left:653px;top:384.0px;width:1770px;height:21.8px;background:#ffffbc;border-top:1.6px solid #f4f4aa;border-bottom:1.6px solid #f4f4aa"></div>
<div class="a" style="left:653px;top:133.20000000000002px;width:1px;height:706.8000000000001px;background:#d3d3d3;"></div>
<div class="a" style="left:693px;top:178.8px;width:1px;height:68.4px;background:#d3d3d3;"></div>
<div class="a" style="left:693px;top:270.0px;width:1px;height:547.2px;background:#d3d3d3;"></div>
<div class="a" style="left:733px;top:292.8px;width:1px;height:456.0px;background:#939393;"></div>
<div class="a" style="left:733px;top:771.6px;width:1px;height:22.8px;background:#d3d3d3;"></div>
<div class="a" style="left:773px;top:452.4px;width:1px;height:91.2px;background:#d3d3d3;"></div>
<div class="ln" style="left:562px;top:111.40px;color:#237893">1</div>
<div class="ln" style="left:562px;top:134.20px;color:#237893">2</div>
<div class="ln" style="left:562px;top:157.00px;color:#237893">3</div>
<div class="ln" style="left:562px;top:179.80px;color:#237893">4</div>
<div class="ln" style="left:562px;top:202.60px;color:#237893">5</div>
<div class="ln" style="left:562px;top:225.40px;color:#237893">6</div>
<div class="ln" style="left:562px;top:248.20px;color:#237893">7</div>
<div class="ln" style="left:562px;top:271.00px;color:#237893">8</div>
<div class="ln" style="left:562px;top:293.80px;color:#237893">9</div>
<div class="ln" style="left:562px;top:316.60px;color:#237893">10</div>
<div class="ln" style="left:562px;top:339.40px;color:#237893">11</div>
<div class="ln" style="left:562px;top:362.20px;color:#237893">12</div>
<div class="ln" style="left:562px;top:385.00px;color:#0b216f">13</div>
<div class="ln" style="left:562px;top:407.80px;color:#237893">14</div>
<div class="ln" style="left:562px;top:430.60px;color:#237893">15</div>
<div class="ln" style="left:562px;top:453.40px;color:#237893">16</div>
<div class="ln" style="left:562px;top:476.20px;color:#237893">17</div>
<div class="ln" style="left:562px;top:499.00px;color:#237893">18</div>
<div class="ln" style="left:562px;top:521.80px;color:#237893">19</div>
<div class="ln" style="left:562px;top:544.60px;color:#237893">20</div>
<div class="ln" style="left:562px;top:567.40px;color:#237893">21</div>
<div class="ln" style="left:562px;top:590.20px;color:#237893">22</div>
<div class="ln" style="left:562px;top:613.00px;color:#237893">23</div>
<div class="ln" style="left:562px;top:635.80px;color:#237893">24</div>
<div class="ln" style="left:562px;top:658.60px;color:#237893">25</div>
<div class="ln" style="left:562px;top:681.40px;color:#237893">26</div>
<div class="ln" style="left:562px;top:704.20px;color:#237893">27</div>
<div class="ln" style="left:562px;top:727.00px;color:#237893">28</div>
<div class="ln" style="left:562px;top:749.80px;color:#237893">29</div>
<div class="ln" style="left:562px;top:772.60px;color:#237893">30</div>
<div class="ln" style="left:562px;top:795.40px;color:#237893">31</div>
<div class="ln" style="left:562px;top:818.20px;color:#237893">32</div>
<div class="ln" style="left:562px;top:841.00px;color:#237893">33</div>
<div class="ln" style="left:562px;top:863.80px;color:#aac4d2">34</div>
<div class="code" style="top:111.40px"><span class="k">public with sharing class</span> FileUtilities <span class="b1">{</span>
    <span class="k">@AuraEnabled</span>
    <span class="k">public static String</span> createFile<span class="b2">(</span>
        <span class="k">String</span> base64data,
        <span class="k">String</span> filename,
        <span class="k">String</span> recordId
    <span class="b2">)</span> <span class="b2">{</span>
        <span class="k">try</span> <span class="b3">{</span>
            <span class="k">ContentVersion</span> contentVersion = <span class="k">new ContentVersion</span><span class="b1">()</span>;
            contentVersion.VersionData = EncodingUtil.base64Decode<span class="b1">(</span>base64data<span class="b1">)</span>;
            contentVersion.Title = filename;
            contentVersion.PathOnClient = filename;
            <span class="k">insert</span> contentVersion;

            contentVersion = <span class="b1">[</span>
                <span class="k">SELECT ContentDocumentId</span>
                <span class="k">FROM ContentVersion</span>
                <span class="k">WHERE Id</span> = :contentVersion.Id
                <span class="k">WITH USER_MODE</span>
            <span class="b1">]</span>;

            <span class="k">ContentDocumentLink</span> contentDocumentLink = <span class="k">new ContentDocumentLink</span><span class="b1">()</span>;
            contentDocumentLink.ContentDocumentId = contentVersion.ContentDocumentId;
            contentDocumentLink.LinkedEntityId = recordId;
            contentDocumentLink.ShareType = <span class="s">'V'</span>;
            <span class="k">insert</span> contentDocumentLink;

            <span class="k">return</span> contentDocumentLink.Id;
        <span class="b3">}</span> <span class="k">catch</span> <span class="b3">(</span>Exception e<span class="b3">)</span> <span class="b3">{</span>
            <span class="k">throw new AuraHandledException</span><span class="b1">(</span><span class="s">'Error creating file: '</span> + e<span class="b1">)</span>;
        <span class="b3">}</span>
    <span class="b2">}</span>
<span class="b1">}</span>
</div>
<svg style="left:573.6px;top:386.4px;" width="16" height="15.5" viewBox="0 0 16 15.5"><path d="M1.5 2.8 Q1.5 1.4 2.9 1.4 H8.6 L14 7.7 L8.6 13.9 H2.9 Q1.5 13.9 1.5 12.5 Z" fill="none" stroke="#be8700" stroke-width="1.8" stroke-linejoin="round"></path></svg>
<svg style="left:2430.6px;top:110.2px;" width="100" height="70" viewBox="0 0 100 70"><rect x="0" y="0" width="6" height="1.2" fill="#0000ff" opacity="0.55"></rect><rect x="7" y="0" width="4" height="1.2" fill="#0000ff" opacity="0.55"></rect><rect x="12" y="0" width="7" height="1.2" fill="#0000ff" opacity="0.55"></rect><rect x="20" y="0" width="5" height="1.2" fill="#0000ff" opacity="0.55"></rect><rect x="26" y="0" width="13" height="1.2" fill="#000000" opacity="0.55"></rect><rect x="40" y="0" width="1" height="1.2" fill="#0431fa" opacity="0.55"></rect><rect x="4" y="2" width="12" height="1.2" fill="#0000ff" opacity="0.55"></rect><rect x="4" y="4" width="6" height="1.2" fill="#0000ff" opacity="0.55"></rect><rect x="11" y="4" width="6" height="1.2" fill="#0000ff" opacity="0.55"></rect><rect x="18" y="4" width="6" height="1.2" fill="#0000ff" opacity="0.55"></rect><rect x="25" y="4" width="10" height="1.2" fill="#000000" opacity="0.55"></rect><rect x="35" y="4" width="1" height="1.2" fill="#319331" opacity="0.55"></rect><rect x="8" y="6" width="6" height="1.2" fill="#0000ff" opacity="0.55"></rect><rect x="15" y="6" width="11" height="1.2" fill="#000000" opacity="0.55"></rect><rect x="8" y="8" width="6" height="1.2" fill="#0000ff" opacity="0.55"></rect><rect x="15" y="8" width="9" height="1.2" fill="#000000" opacity="0.55"></rect><rect x="8" y="10" width="6" height="1.2" fill="#0000ff" opacity="0.55"></rect><rect x="15" y="10" width="8" height="1.2" fill="#000000" opacity="0.55"></rect><rect x="4" y="12" width="1" height="1.2" fill="#319331" opacity="0.55"></rect><rect x="6" y="12" width="1" height="1.2" fill="#319331" opacity="0.55"></rect><rect x="8" y="14" width="3" height="1.2" fill="#0000ff" opacity="0.55"></rect><rect x="12" y="14" width="1" height="1.2" fill="#7b3814" opacity="0.55"></rect><rect x="12" y="16" width="14" height="1.2" fill="#0000ff" opacity="0.55"></rect><rect x="27" y="16" width="14" height="1.2" fill="#000000" opacity="0.55"></rect><rect x="42" y="16" width="1" height="1.2" fill="#000000" opacity="0.55"></rect><rect x="44" y="16" width="3" height="1.2" fill="#0000ff" opacity="0.55"></rect><rect x="48" y="16" width="14" height="1.2" fill="#0000ff" opacity="0.55"></rect><rect x="62" y="16" width="2" height="1.2" fill="#0431fa" opacity="0.55"></rect><rect x="64" y="16" width="1" height="1.2" fill="#000000" opacity="0.55"></rect><rect x="12" y="18" width="26" height="1.2" fill="#000000" opacity="0.55"></rect><rect x="39" y="18" width="1" height="1.2" fill="#000000" opacity="0.55"></rect><rect x="41" y="18" width="25" height="1.2" fill="#000000" opacity="0.55"></rect><rect x="66" y="18" width="1" height="1.2" fill="#0431fa" opacity="0.55"></rect><rect x="67" y="18" width="10" height="1.2" fill="#000000" opacity="0.55"></rect><rect x="77" y="18" width="1" height="1.2" fill="#0431fa" opacity="0.55"></rect><rect x="78" y="18" width="1" height="1.2" fill="#000000" opacity="0.55"></rect><rect x="12" y="20" width="20" height="1.2" fill="#000000" opacity="0.55"></rect><rect x="33" y="20" width="1" height="1.2" fill="#000000" opacity="0.55"></rect><rect x="35" y="20" width="9" height="1.2" fill="#000000" opacity="0.55"></rect><rect x="12" y="22" width="27" height="1.2" fill="#000000" opacity="0.55"></rect><rect x="40" y="22" width="1" height="1.2" fill="#000000" opacity="0.55"></rect><rect x="42" y="22" width="9" height="1.2" fill="#000000" opacity="0.55"></rect><rect x="12" y="24" width="6" height="1.2" fill="#0000ff" opacity="0.55"></rect><rect x="19" y="24" width="15" height="1.2" fill="#000000" opacity="0.55"></rect><rect x="12" y="28" width="14" height="1.2" fill="#000000" opacity="0.55"></rect><rect x="27" y="28" width="1" height="1.2" fill="#000000" opacity="0.55"></rect><rect x="29" y="28" width="1" height="1.2" fill="#0431fa" opacity="0.55"></rect><rect x="16" y="30" width="6" height="1.2" fill="#0000ff" opacity="0.55"></rect><rect x="23" y="30" width="17" height="1.2" fill="#0000ff" opacity="0.55"></rect><rect x="16" y="32" width="4" height="1.2" fill="#0000ff" opacity="0.55"></rect><rect x="21" y="32" width="14" height="1.2" fill="#0000ff" opacity="0.55"></rect><rect x="16" y="34" width="5" height="1.2" fill="#0000ff" opacity="0.55"></rect><rect x="22" y="34" width="2" height="1.2" fill="#0000ff" opacity="0.55"></rect><rect x="25" y="34" width="1" height="1.2" fill="#000000" opacity="0.55"></rect><rect x="27" y="34" width="18" height="1.2" fill="#000000" opacity="0.55"></rect><rect x="16" y="36" width="4" height="1.2" fill="#0000ff" opacity="0.55"></rect><rect x="21" y="36" width="9" height="1.2" fill="#0000ff" opacity="0.55"></rect><rect x="12" y="38" width="1" height="1.2" fill="#0431fa" opacity="0.55"></rect><rect x="13" y="38" width="1" height="1.2" fill="#000000" opacity="0.55"></rect><rect x="12" y="42" width="19" height="1.2" fill="#0000ff" opacity="0.55"></rect><rect x="32" y="42" width="19" height="1.2" fill="#000000" opacity="0.55"></rect><rect x="52" y="42" width="1" height="1.2" fill="#000000" opacity="0.55"></rect><rect x="54" y="42" width="3" height="1.2" fill="#0000ff" opacity="0.55"></rect><rect x="58" y="42" width="19" height="1.2" fill="#0000ff" opacity="0.55"></rect><rect x="77" y="42" width="2" height="1.2" fill="#0431fa" opacity="0.55"></rect><rect x="79" y="42" width="1" height="1.2" fill="#000000" opacity="0.55"></rect><rect x="12" y="44" width="37" height="1.2" fill="#000000" opacity="0.55"></rect><rect x="50" y="44" width="1" height="1.2" fill="#000000" opacity="0.55"></rect><rect x="52" y="44" width="33" height="1.2" fill="#000000" opacity="0.55"></rect><rect x="12" y="46" width="34" height="1.2" fill="#000000" opacity="0.55"></rect><rect x="47" y="46" width="1" height="1.2" fill="#000000" opacity="0.55"></rect><rect x="49" y="46" width="9" height="1.2" fill="#000000" opacity="0.55"></rect><rect x="12" y="48" width="29" height="1.2" fill="#000000" opacity="0.55"></rect><rect x="42" y="48" width="1" height="1.2" fill="#000000" opacity="0.55"></rect><rect x="44" y="48" width="3" height="1.2" fill="#a31515" opacity="0.55"></rect><rect x="47" y="48" width="1" height="1.2" fill="#000000" opacity="0.55"></rect><rect x="12" y="50" width="6" height="1.2" fill="#0000ff" opacity="0.55"></rect><rect x="19" y="50" width="20" height="1.2" fill="#000000" opacity="0.55"></rect><rect x="12" y="54" width="6" height="1.2" fill="#0000ff" opacity="0.55"></rect><rect x="19" y="54" width="23" height="1.2" fill="#000000" opacity="0.55"></rect><rect x="8" y="56" width="1" height="1.2" fill="#7b3814" opacity="0.55"></rect><rect x="10" y="56" width="5" height="1.2" fill="#0000ff" opacity="0.55"></rect><rect x="16" y="56" width="1" height="1.2" fill="#7b3814" opacity="0.55"></rect><rect x="17" y="56" width="9" height="1.2" fill="#000000" opacity="0.55"></rect><rect x="27" y="56" width="1" height="1.2" fill="#000000" opacity="0.55"></rect><rect x="28" y="56" width="1" height="1.2" fill="#7b3814" opacity="0.55"></rect><rect x="30" y="56" width="1" height="1.2" fill="#7b3814" opacity="0.55"></rect><rect x="12" y="58" width="5" height="1.2" fill="#0000ff" opacity="0.55"></rect><rect x="18" y="58" width="3" height="1.2" fill="#0000ff" opacity="0.55"></rect><rect x="22" y="58" width="20" height="1.2" fill="#0000ff" opacity="0.55"></rect><rect x="42" y="58" width="1" height="1.2" fill="#0431fa" opacity="0.55"></rect><rect x="43" y="58" width="6" height="1.2" fill="#a31515" opacity="0.55"></rect><rect x="50" y="58" width="8" height="1.2" fill="#a31515" opacity="0.55"></rect><rect x="59" y="58" width="5" height="1.2" fill="#a31515" opacity="0.55"></rect><rect x="65" y="58" width="1" height="1.2" fill="#a31515" opacity="0.55"></rect><rect x="67" y="58" width="1" height="1.2" fill="#000000" opacity="0.55"></rect><rect x="69" y="58" width="1" height="1.2" fill="#000000" opacity="0.55"></rect><rect x="70" y="58" width="1" height="1.2" fill="#0431fa" opacity="0.55"></rect><rect x="71" y="58" width="1" height="1.2" fill="#000000" opacity="0.55"></rect><rect x="8" y="60" width="1" height="1.2" fill="#7b3814" opacity="0.55"></rect><rect x="4" y="62" width="1" height="1.2" fill="#319331" opacity="0.55"></rect><rect x="0" y="64" width="1" height="1.2" fill="#0431fa" opacity="0.55"></rect></svg>
<div class="a" style="left:2542px;top:110.4px;width:1px;height:841px;background:#e8e8e8;"></div>
<div class="a" style="left:2543px;top:253px;width:15px;height:13px;background:#ffffcc;"></div>
<div class="a" style="left:2543px;top:252.5px;width:15px;height:1.8px;background:#3c3c3c;"></div>
<div class="a" style="left:569px;top:952px;width:1989px;height:1px;background:#d4d4d4;"></div>
<span class="t" style="left: 593px; top: 965.91px; font-size: 13.1px; color: rgb(51, 51, 51); letter-spacing: -0.391px;">TEST RESULTS</span>
<div class="a" style="left:590px;top:985.6px;width:97px;height:1.4px;background:#424242;"></div>
<span class="t" style="left: 714px; top: 965.91px; font-size: 13.1px; color: rgb(111, 111, 111); letter-spacing: -0.031px;">TERMINAL</span>
<span class="t" style="left: 809.2px; top: 965.91px; font-size: 13.1px; color: rgb(111, 111, 111); letter-spacing: -0.509px;">PROBLEMS</span>
<svg style="left:2413px;top:967.5px;" width="18" height="13" viewBox="0 0 18 13"><path d="M0.6 1 H17 M0.6 4.6 H17 M0.6 8.2 H10 M0.6 11.8 H10" stroke="#424242" stroke-width="1.2"></path><path d="M12.4 7.8 L16.6 12 M16.6 7.8 L12.4 12" stroke="#424242" stroke-width="1.2"></path></svg>
<svg style="left:2444.5px;top:965.5px;" width="18" height="17" viewBox="0 0 18 17"><path d="M0.6 5 H16.6 M12.4 0.8 L16.6 5 L12.4 9.2" fill="none" stroke="#424242" stroke-width="1.2"></path><path d="M17 11.8 H1 M5.2 7.6 L1 11.8 L5.2 16" fill="none" stroke="#424242" stroke-width="1.2"></path></svg>
<div class="a" style="left:2476px;top:964px;width:1px;height:19px;background:#c8c8c8;"></div>
<svg style="left:2492.5px;top:966px;" width="15" height="14" viewBox="0 0 15 14"><path d="M0.6 4 V0.6 H4 M10.8 0.6 H14.2 V4 M14.2 10 V13.4 H10.8 M4 13.4 H0.6 V10" fill="none" stroke="#424242" stroke-width="1.2"></path></svg>
<svg style="left:2525.5px;top:968px;" width="11" height="11" viewBox="0 0 11 11"><path d="M0.5 0.5 L10.5 10.5 M10.5 0.5 L0.5 10.5" stroke="#424242" stroke-width="1.2"></path></svg>
<div class="a" style="left:1878px;top:994px;width:1px;height:395px;background:#d4d4d4;"></div>
<div class="a" style="left:1895px;top:994px;width:1px;height:417px;background:#d4d4d4;"></div>
<div class="a" style="left:1896px;top:994px;width:662px;height:26px;background:#e4e6f1;"></div>
<svg style="left:1932px;top:999px;" width="16" height="14" viewBox="0 0 16 14"><path d="M2 12 A6.3 6.3 0 0 1 13 3.4" fill="none" stroke="#333" stroke-width="1.4"></path></svg>
<span class="t" style="left: 1956px; top: 998.32px; font-size: 16.4px; color: rgb(34, 34, 34); letter-spacing: 0.746px;">aer Local Apex Debugger</span>
<div class="a" style="left:1915px;top:1020px;width:1px;height:26px;background:#b0b0b0;"></div>
<svg style="left:1942px;top:1029px;" width="16" height="15" viewBox="0 0 16 15"><path d="M1.6 3 A6.4 6.4 0 0 0 14 11" fill="none" stroke="#333" stroke-width="1.4"></path></svg>
<span class="t" style="left: 1965.6px; top: 1024.02px; font-size: 16.4px; color: rgb(34, 34, 34); letter-spacing: 0.569px;">createFileFailsWhenIncorrectRecordId</span>
<span class="t" style="left: 2273.4px; top: 1025.21px; font-size: 14.4px; color: rgb(113, 113, 113); letter-spacing: 0.502px;">FileUtilitiesTest ‹ aer</span>
<svg style="left:1914.5px;top:1053.5px;" width="7" height="12" viewBox="0 0 7 12"><path d="M0.7 0.8 L5.8 5.8 L0.7 10.8" fill="none" stroke="#424242" stroke-width="1.3"></path></svg>
<span class="t" style="left: 1936.4px; top: 1050.72px; font-size: 16.4px; color: rgb(34, 34, 34); letter-spacing: 0.787px;">1 older result</span>
<svg style="left:0px;top:1411px;" width="41" height="27" viewBox="0 0 41 27"><path d="M15.2 9.4 L19.8 14.1 L15.2 18.8 M25 5.6 L20.8 10.1 L25.2 14.5" fill="none" stroke="#ffffff" stroke-width="1.3"></path></svg>
<svg style="left:51px;top:1415.6px;" width="14" height="15" viewBox="0 0 14 15"><circle cx="3" cy="2.8" r="2.2" fill="none" stroke="#ffffff" stroke-width="1.3"></circle><circle cx="3" cy="12.2" r="2.2" fill="none" stroke="#ffffff" stroke-width="1.3"></circle><circle cx="11" cy="5.6" r="2.2" fill="none" stroke="#ffffff" stroke-width="1.3"></circle><path d="M3 5 V10 M11 7.8 Q11 10 5 10.8" fill="none" stroke="#ffffff" stroke-width="1.3"></path></svg>
<span class="t" style="left: 72px; top: 1416.1px; font-size: 15px; color: rgb(255, 255, 255); letter-spacing: 0.96px;">main*</span>
<svg style="left:122px;top:1417.5px;" width="16" height="14" viewBox="0 0 16 14"><path d="M2 6 A6 6 0 0 1 13.4 4.4 M14 8 A6 6 0 0 1 2.6 9.6" fill="none" stroke="#ffffff" stroke-width="1.3"></path><path d="M13.8 0.8 V4.6 H10 M2.2 13.2 V9.4 H6" fill="none" stroke="#ffffff" stroke-width="1.3"></path></svg>
<svg style="left:158.3px;top:1417.5px;" width="15" height="15" viewBox="0 0 15 15"><circle cx="7.4" cy="7.4" r="6.6" fill="none" stroke="#ffffff" stroke-width="1.3"></circle><path d="M4.8 4.8 L10 10 M10 4.8 L4.8 10" fill="none" stroke="#ffffff" stroke-width="1.3"></path></svg>
<span class="t" style="left:179.50px;top:1416.10px;font-size:15px;color:#ffffff;">0</span>
<svg style="left:193.5px;top:1417px;" width="15" height="15" viewBox="0 0 15 15"><path d="M7 0.8 L13.8 13.6 H0.2 Z" fill="none" stroke="#ffffff" stroke-width="1.3"></path><path d="M7 5 V9.6 M7 11 V12.2" fill="none" stroke="#ffffff" stroke-width="1.3"></path></svg>
<span class="t" style="left:213.50px;top:1416.10px;font-size:15px;color:#ffffff;">0</span>
<svg style="left:242.3px;top:1417px;" width="15" height="15" viewBox="0 0 15 15"><path d="M8.6 2.4 L12.6 6.4 L9.6 9.4 Q7.6 11 5.6 9 Q4 7 5.6 5.4 Z M1 14 L5.4 9.6 M10.4 4.6 L13.8 1.2 M3.4 6 L2.6 6.8 M8 10.6 L7.2 11.4" fill="none" stroke="#ffffff" stroke-width="1.3"></path></svg>
<span class="t" style="left: 262.7px; top: 1416.1px; font-size: 15px; color: rgb(255, 255, 255); letter-spacing: 0.161px;">No Tracing</span>
<svg style="left:355px;top:1417px;" width="17" height="15" viewBox="0 0 17 15"><path d="M5 1 L16 7.4 L9 11.6" fill="none" stroke="#ffffff" stroke-width="1.3"></path><path d="M5 1 V6" fill="none" stroke="#ffffff" stroke-width="1.3"></path><ellipse cx="4.6" cy="11" rx="2.6" ry="3" fill="none" stroke="#ffffff" stroke-width="1.3"></ellipse><path d="M0.6 11 H8.6 M1.2 8 L2.6 9 M1.2 14.4 L2.6 13 M8 8 L6.6 9 M8 14.4 L6.6 13" fill="none" stroke="#ffffff" stroke-width="1.3"></path></svg>
<svg style="left:393px;top:1416.5px;" width="17" height="16" viewBox="0 0 17 16"><path d="M0.8 10 Q1.6 4.6 9.6 4.6 H11.6 M9.4 0.8 L14 4.8 L9.6 8.8" fill="none" stroke="#ffffff" stroke-width="1.3"></path><path d="M9.6 8.8 Q4.4 8.4 1.8 10.6" fill="none" stroke="#ffffff" stroke-width="1.3"></path><circle cx="6.6" cy="12.6" r="2.2" fill="none" stroke="#ffffff" stroke-width="1.3"></circle></svg>
<span class="t" style="left: 414px; top: 1416.1px; font-size: 15px; color: rgb(255, 255, 255); letter-spacing: 0.187px;">Live Share</span>
<svg style="left:509px;top:1419px;" width="13" height="12" viewBox="0 0 13 12"><path d="M0 1 H13 M0 6 H13 M0 11 H13" stroke="#fff" stroke-width="1.6"></path></svg>
<svg style="left:1873px;top:1417px;" width="11" height="15" viewBox="0 0 11 15"><circle cx="5.2" cy="7.4" r="3" fill="none" stroke="#ffffff" stroke-width="1.3"></circle><path d="M5.2 0 V4.4 M5.2 10.4 V15" fill="none" stroke="#ffffff" stroke-width="1.3"></path></svg>
<span class="t" style="left: 1891.4px; top: 1416.1px; font-size: 15px; color: rgb(255, 255, 255); letter-spacing: 0.263px;">Alba Rivas (3 years ago)</span>
<div class="a" style="left:2071.8px;top:1411px;width:41px;height:27px;background:#673319;"></div>
<svg style="left:2084px;top:1417px;" width="16" height="16" viewBox="0 0 16 16"><circle cx="6.2" cy="6.2" r="5.2" fill="none" stroke="#ffffff" stroke-width="1.3"></circle><path d="M10 10 L15 15 M6.2 3.6 V8.8 M3.6 6.2 H8.8" fill="none" stroke="#ffffff" stroke-width="1.3"></path></svg>
<span class="t" style="left: 2122px; top: 1416.1px; font-size: 15px; color: rgb(255, 255, 255); letter-spacing: 0.128px;">Ln 13, Col 1</span>
<span class="t" style="left: 2224.5px; top: 1416.1px; font-size: 15px; color: rgb(255, 255, 255); letter-spacing: 0.16px;">Spaces: 4</span>
<span class="t" style="left: 2313px; top: 1416.1px; font-size: 15px; color: rgb(255, 255, 255); letter-spacing: -0.625px;">UTF-8</span>
<span class="t" style="left: 2372.7px; top: 1416.1px; font-size: 15px; color: rgb(255, 255, 255); letter-spacing: -1.516px;">LF</span>
<span class="t" style="left: 2409.8px; top: 1416.1px; font-size: 15px; color: rgb(255, 255, 255); letter-spacing: -0.794px;">{ }</span>
<span class="t" style="left: 2432.3px; top: 1416.1px; font-size: 15px; color: rgb(255, 255, 255); letter-spacing: 0.266px;">Apex</span>
<svg style="left:2480px;top:1411px;" width="30" height="27" viewBox="0 0 30 27"><circle cx="11.6" cy="8.8" r="2.3" fill="none" stroke="#ffffff" stroke-width="1.3"></circle><circle cx="18.9" cy="8.8" r="2.5" fill="none" stroke="#ffffff" stroke-width="1.3"></circle><path d="M8.4 12.2 Q7.4 7 9.6 5.6 Q12 4.4 15 6.8 Q17.8 4.4 20.6 5.6 Q22.8 7 22 12.2" fill="none" stroke="#ffffff" stroke-width="1.3"></path><ellipse cx="15.3" cy="15.6" rx="8" ry="3.8" fill="none" stroke="#ffffff" stroke-width="1.3"></ellipse><rect x="12.6" y="14.4" width="2" height="3.4" fill="#fff"></rect><path d="M8.4 5.4 L22.8 19.8" stroke="#cc6633" stroke-width="3"></path><path d="M8.4 5.4 L22.8 19.8" stroke="#fff" stroke-width="1.3"></path></svg>
<svg style="left:2520px;top:1411px;" width="30" height="27" viewBox="0 0 30 27"><path d="M5.6 17.6 H18.6 Q17.4 16.2 17.4 13.6 V10.2 Q17.4 5.6 11.6 5.4 Q6.8 5.6 6.8 10.2 V13.6 Q6.8 16.2 5.6 17.6 Z" fill="none" stroke="#ffffff" stroke-width="1.3"></path><path d="M10 18.6 Q11.6 20.4 13.2 18.6 Z" fill="#fff" stroke="#fff" stroke-width="1"></path><circle cx="15.8" cy="8" r="3.8" fill="#cc6633"></circle><circle cx="15.8" cy="8" r="2.9" fill="#fff"></circle></svg>
</body></html>
